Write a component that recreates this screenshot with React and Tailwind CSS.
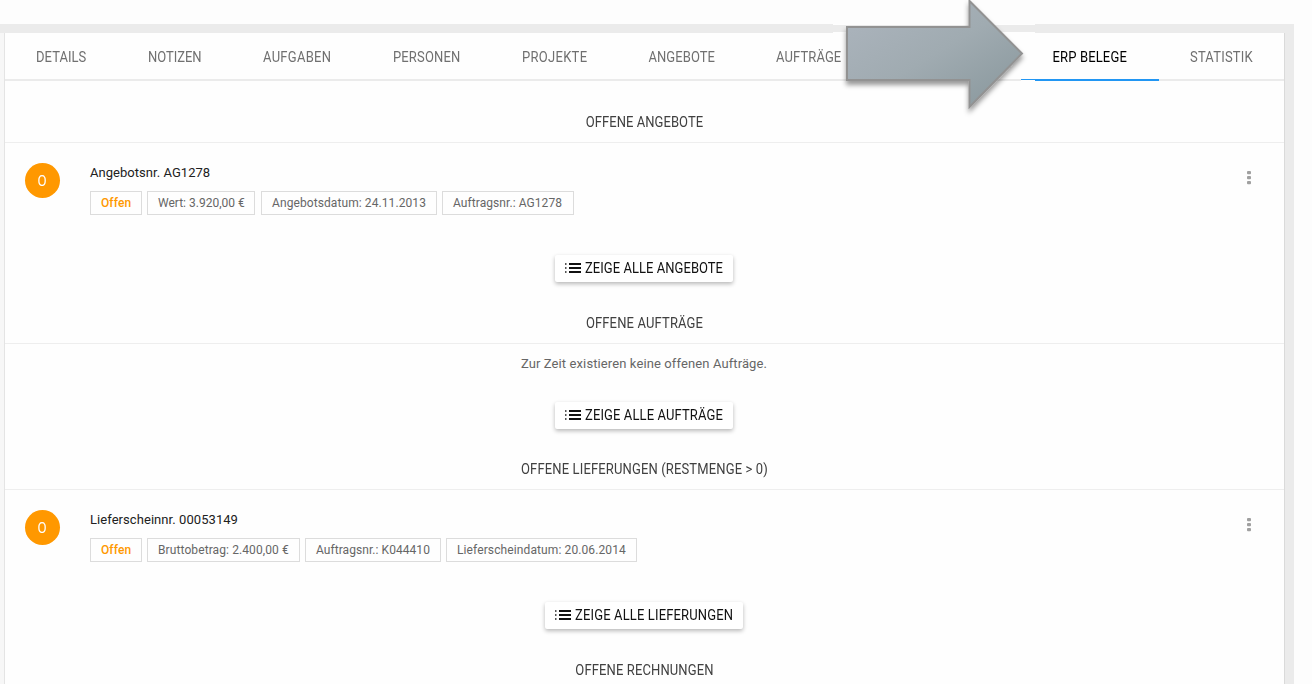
const TABS = [
  { label: "DETAILS", size: "w-[112px] pl-[31px] tracking-[0.05px]" },
  { label: "NOTIZEN", size: "w-[115px] pl-[31px] tracking-[-0.05px]" },
  { label: "AUFGABEN", size: "w-[130px] pl-[31px] tracking-[0.28px]" },
  { label: "PERSONEN", size: "w-[129px] pl-[31px] tracking-[0.14px]" },
  { label: "PROJEKTE", size: "w-[127px] pl-[31px] tracking-[0.29px]" },
  { label: "ANGEBOTE", size: "w-[127px] pl-[30.5px] tracking-[0.06px]" },
  { label: "AUFTRÄGE", size: "w-[127px] pl-[31px] tracking-[0.1px]" },
  { label: "", size: "w-[149px]" },
  { label: "ERP BELEGE", size: "w-[138px] pl-[31.5px] tracking-[0.15px]", active: true },
  { label: "STATISTIK", size: "w-[125px] pl-[31px] tracking-[0.2px]" },
];

/* Capital labels are set slightly taller than the body text. */
function Caps({ children }) {
  return <span className="inline-block origin-top scale-y-[1.08]">{children}</span>;
}

function TabBar() {
  return (
    <nav className="flex h-12 shrink-0 border-b-2 border-[#ebebeb] text-[13px] leading-5">
      {TABS.map((tab, i) => (
        <div
          key={i}
          className={`-mb-0.5 h-12 shrink-0 whitespace-nowrap pt-[14px] ${tab.size} ${
            tab.active ? "border-b-2 border-[#2196f3] text-black" : "text-[#707070]"
          }`}
        >
          <Caps>{tab.label}</Caps>
        </div>
      ))}
    </nav>
  );
}

function SectionTitle({ children, tracking }) {
  return (
    <h2
      className={`h-[31px] border-b border-[#eeeeee] text-center text-[13px] font-normal leading-5 text-[#404040] ${tracking}`}
    >
      <Caps>{children}</Caps>
    </h2>
  );
}

function Chip({ children, className }) {
  return (
    <span
      className={`flex h-6 items-center whitespace-nowrap border border-[#dcdcdc] pl-[10px] text-[12px] leading-none ${className}`}
    >
      {children}
    </span>
  );
}

function Entry({ title, titleTracking, children }) {
  return (
    <div className="flex h-28 pl-5 pt-5">
      <div className="flex size-[35px] shrink-0 items-center justify-center rounded-full bg-[#ff9800] pt-px text-[15px] text-white">
        <span className="inline-block scale-x-[0.88]">O</span>
      </div>
      <div className="ml-[30px] flex-1">
        <div className={`h-7 whitespace-nowrap text-[13px] leading-5 text-[#212121] ${titleTracking}`}>{title}</div>
        <div className="flex">{children}</div>
      </div>
      <svg className="mr-[33px] mt-[7px] h-4 w-[5px] shrink-0 fill-[#a0a0a0]" viewBox="0 0 5 16">
        <rect x="1" y="1" width="4" height="3.200" rx="1" />
        <rect x="1" y="6" width="4" height="3.200" rx="1" />
        <rect x="1" y="11" width="4" height="3.200" rx="1" />
      </svg>
    </div>
  );
}

function ShowAll({ children, className }) {
  return (
    <div className="flex justify-center pr-px">
      <button
        className={`flex h-[27px] items-center whitespace-nowrap rounded-[2px] bg-white pb-px pl-[9px] text-[13px] leading-5 text-[#111] shadow-[0_2px_4px_rgba(0,0,0,0.28)] ${className}`}
      >
        <svg className="mr-[4px] h-[10px] w-[17px] shrink-0" viewBox="0 0 17 10" fill="#111">
          <path d="M5 0h12v2H5zM5 4h12v2H5zM5 8h12v2H5z" />
          <path fill="#555" d="M1 0h1.500v2H1zM1 4h1.500v2H1zM1 8h1.500v2H1z" />
        </svg>
        <Caps>{children}</Caps>
      </button>
    </div>
  );
}

function Arrow() {
  return (
    <svg className="absolute left-[833px] top-0 h-[125px] w-[202px]" viewBox="0 0 202 125">
      <defs>
        <linearGradient id="arrowFill" x1="0" y1="0" x2="1" y2="1">
          <stop offset="0" stopColor="#adb5be" />
          <stop offset="0.5" stopColor="#a0abb1" />
          <stop offset="1" stopColor="#87969b" />
        </linearGradient>
        <filter id="arrowShadow" x="-10%" y="-10%" width="120%" height="130%">
          <feDropShadow dx="0" dy="4" stdDeviation="2.6" floodColor="#000" floodOpacity="0.4" />
        </filter>
      </defs>
      <path fill="#fefefe" d="M0 24h202v1H0zM0 32h202v1H0zM188 80h14v1h-14z" />
      <path
        d="M14 27H136.500V1L189 53.500L136.500 107V80H14Z"
        fill="url(#arrowFill)"
        stroke="#929292"
        strokeWidth="2"
        filter="url(#arrowShadow)"
      />
    </svg>
  );
}

export default function App() {
  return (
    <div className="relative h-[684px] w-[1312px] overflow-hidden bg-[#fdfdfd] pt-6 font-['Roboto',sans-serif]">
      <div className="h-[660px] w-[1294px] bg-[#ebebeb] pt-[9px]">
        <div className="flex h-full">
          <div className="w-[5px] border-r border-[#e4e4e4] bg-[#f7f7f7]" />
          <main className="h-full w-[1279px] overflow-hidden bg-[#fefefe] shadow-[1px_0_0_#dadada]">
            <TabBar />
            <section className="h-[232px] pt-[31px]">
              <SectionTitle tracking="tracking-[0.05px]">OFFENE ANGEBOTE</SectionTitle>
              <Entry title="Angebotsnr. AG1278" titleTracking="tracking-[0.04px]">
                <Chip className="w-[52px] font-medium tracking-[0.1px] text-[#ff9800]">Offen</Chip>
                <Chip className="ml-[5px] w-[108px] tracking-[0px] text-[#666]">Wert: 3.920,00 €</Chip>
                <Chip className="ml-[6px] w-[176px] tracking-[0.09px] text-[#666]">Angebotsdatum: 24.11.2013</Chip>
                <Chip className="ml-[5px] w-[132px] tracking-[0.07px] text-[#666]">Auftragsnr.: AG1278</Chip>
              </Entry>
              <ShowAll className="w-[178px] tracking-[0.04px]">ZEIGE ALLE ANGEBOTE</ShowAll>
            </section>
            <section className="h-[146px]">
              <SectionTitle tracking="tracking-[0.14px]">OFFENE AUFTRÄGE</SectionTitle>
              <p className="h-[58px] pr-px pt-[10px] text-center text-[13px] leading-5 tracking-[0.11px] text-[#666]">
                Zur Zeit existieren keine offenen Aufträge.
              </p>
              <ShowAll className="w-[178px] tracking-[0.11px]">ZEIGE ALLE AUFTRÄGE</ShowAll>
            </section>
            <section className="h-[201px]">
              <SectionTitle tracking="tracking-[0.14px]">OFFENE LIEFERUNGEN (RESTMENGE &gt; 0)</SectionTitle>
              <Entry title="Lieferscheinnr. 00053149" titleTracking="tracking-[0.06px]">
                <Chip className="w-[52px] font-medium tracking-[0.1px] text-[#ff9800]">Offen</Chip>
                <Chip className="ml-[5px] w-[153px] tracking-[0.1px] text-[#666]">Bruttobetrag: 2.400,00 €</Chip>
                <Chip className="ml-[5px] w-[136px] tracking-[0.06px] text-[#666]">Auftragsnr.: K044410</Chip>
                <Chip className="ml-[5px] w-[191px] tracking-[0.11px] text-[#666]">Lieferscheindatum: 20.06.2014</Chip>
              </Entry>
              <ShowAll className="w-[198px] tracking-[0.14px]">ZEIGE ALLE LIEFERUNGEN</ShowAll>
            </section>
            <section>
              <SectionTitle tracking="tracking-[0.12px]">OFFENE RECHNUNGEN</SectionTitle>
            </section>
          </main>
        </div>
      </div>
      <Arrow />
    </div>
  );
}
